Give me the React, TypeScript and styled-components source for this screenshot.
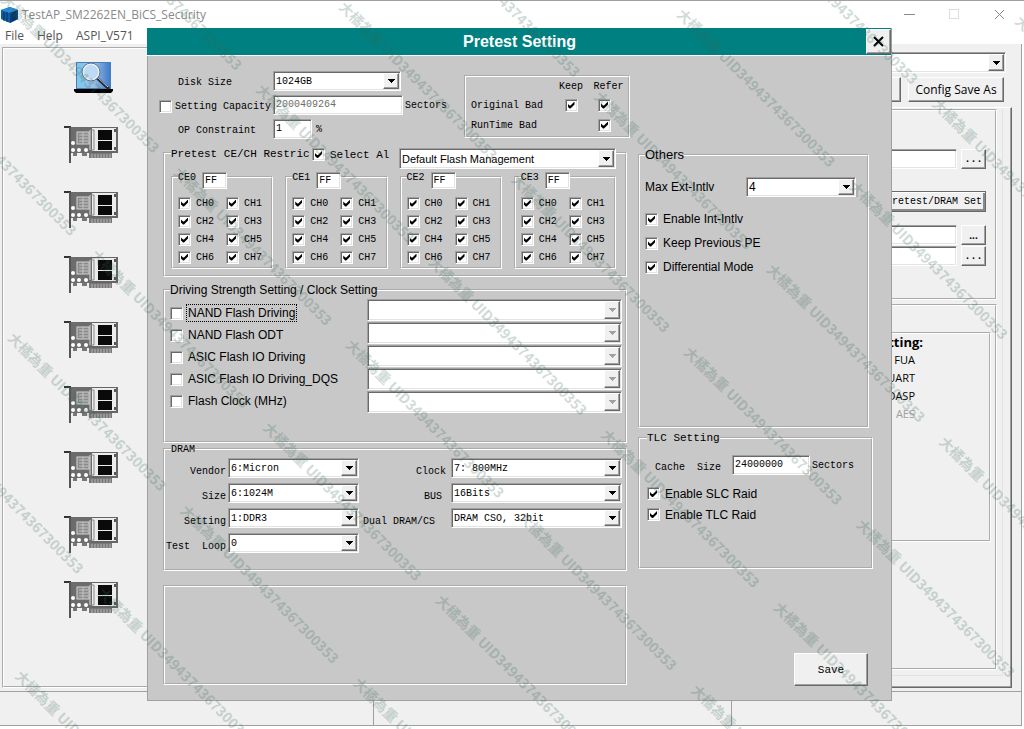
import React from 'react';
import styled, { createGlobalStyle, css } from 'styled-components';

const mono = '"Liberation Mono", monospace';
const sans = '"Liberation Sans", sans-serif';
const ui = '"Open Sans", "Noto Sans", sans-serif';

const GlobalStyle = createGlobalStyle`
  *, *::before, *::after { box-sizing: border-box; }
  body { margin: 0; background: #fff; color: #000; font: 12px ${sans}; overflow: hidden; }
  button, input, select { margin: 0; color: inherit; font: inherit; border-radius: 0; }
`;

const sunken = css`
  border: 1px solid;
  border-color: #a0a0a0 #fff #fff #a0a0a0;
  box-shadow: inset 1px 1px #696969, inset -1px -1px #e3e3e3;
`;

const raised = css`
  border: 1px solid;
  border-color: #fff #696969 #696969 #fff;
  box-shadow: inset -1px -1px #a0a0a0;
  background: #f0f0f0;
`;

/* ---------- shared controls ---------- */

const Field = styled.input<{ $w?: number }>`
  ${sunken}
  display: block;
  width: ${p => (p.$w ? `${p.$w}px` : '100%')};
  min-width: 0;
  height: 20px;
  padding: 0 0 2px 2px;
  background: #fff;
  font: 10px ${mono};
  outline: none;
  &:disabled { color: #6d6d6d; background: #fff; }
`;

const SelectBox = styled.span<{ $h?: number; $w?: number }>`
  ${sunken}
  position: relative;
  display: block;
  flex: ${p => (p.$w ? 'none' : '1')};
  width: ${p => (p.$w ? `${p.$w}px` : 'auto')};
  min-width: 0;
  height: ${p => p.$h ?? 20}px;
  background: #fff;
`;

const NativeSelect = styled.select<{ $font?: string }>`
  appearance: none;
  display: block;
  width: 100%;
  height: 100%;
  padding: 0 18px 0 2px;
  border: 0;
  background: transparent;
  font: ${p => p.$font ?? `10px ${mono}`};
  outline: none;
  opacity: 1;
`;

const ArrowCap = styled.span<{ $off?: boolean }>`
  ${raised}
  position: absolute;
  top: 1px;
  right: 1px;
  bottom: 1px;
  width: 16px;
  display: flex;
  align-items: center;
  justify-content: center;
  pointer-events: none;
  color: ${p => (p.$off ? '#a0a0a0' : '#000')};
`;

function Select(props: {
  label?: string; id?: string; value: string; disabled?: boolean; h?: number; w?: number; font?: string;
}) {
  return (
    <SelectBox $h={props.h} $w={props.w}>
      <NativeSelect id={props.id} aria-label={props.label} disabled={props.disabled} $font={props.font}>
        <option>{props.value}</option>
      </NativeSelect>
      <ArrowCap $off={props.disabled}>
        <svg width="7" height="4" shapeRendering="crispEdges" aria-hidden="true">
          <path d="M0 0h7v1h-1v1h-1v1h-1v1h-1v-1h-1v-1h-1v-1h-1z" fill="currentColor" />
        </svg>
      </ArrowCap>
    </SelectBox>
  );
}

const Tick = styled.input.attrs({ type: 'checkbox' })`
  ${sunken}
  appearance: none;
  position: relative;
  flex: none;
  display: block;
  width: 13px;
  height: 13px;
  background: #fff;
  &:checked::after {
    content: '';
    position: absolute;
    top: 2px;
    left: 2px;
    width: 7px;
    height: 7px;
    background: #000;
    clip-path: polygon(0 2px, 2px 4px, 3px 4px, 7px 0, 7px 3px, 3px 7px, 2px 7px, 0 5px);
  }
`;

const TickLabel = styled.label<{ $mono?: boolean; $h: number }>`
  display: flex;
  align-items: center;
  gap: 5px;
  height: ${p => p.$h}px;
  white-space: nowrap;
  font: ${p => (p.$mono ? `10px ${mono}` : `12px ${sans}`)};
`;

const FocusText = styled.span<{ $focus?: boolean }>`
  outline: ${p => (p.$focus ? '1px dotted #000' : 'none')};
  outline-offset: 1px;
`;

const Group = styled.fieldset<{ $pad?: string; $top?: number; $min?: number; $right?: number }>`
  min-width: 0;
  margin: ${p => p.$top ?? 0}px ${p => p.$right ?? 0}px 0 0;
  padding: ${p => p.$pad ?? '0'};
  min-height: ${p => (p.$min ? `${p.$min}px` : '0')};
  border: 2px groove #fff;
`;

const Legend = styled.legend<{ $font?: string; $h?: number; $inset?: number; $wide?: boolean }>`
  display: flex;
  align-items: flex-start;
  width: ${p => (p.$wide ? '100%' : 'auto')};
  height: ${p => p.$h ?? 10}px;
  margin-left: ${p => p.$inset ?? 0}px;
  padding: 0;
  white-space: nowrap;
  font: ${p => p.$font ?? `10px ${mono}`};
  line-height: ${p => p.$h ?? 12}px;
`;

/* ---------- main window ---------- */

const Window = styled.div`
  position: relative;
  display: flex;
  flex-direction: column;
  min-height: 100vh;
  padding: 0 2px 3px 0;
  border-top: 1px solid #a0a0a0;
  overflow: hidden;
`;

const TitleBar = styled.header`
  display: flex;
  align-items: center;
  gap: 4px;
  height: 27px;
  padding: 0 17px 0 1px;
  color: #8a8a8a;
  font: 12px ${ui};
`;

const TitleText = styled.span`flex: 1;`;

const WindowButtons = styled.div`
  display: flex;
  gap: 34px;
`;

const GlyphButton = styled.button`
  display: flex;
  padding: 0;
  border: 0;
  background: none;
  color: #8a8a8a;
`;

const MenuBar = styled.nav`
  display: flex;
  gap: 13px;
  height: 16px;
  padding-left: 5px;
`;

const MenuLink = styled.a`
  color: #555;
  font: 12px/16px ${ui};
  text-decoration: none;
`;

const Workspace = styled.div`
  flex: 1;
  display: flex;
  padding: 3px 9px 3px 2px;
  background: #f0f0f0;
  border-right: 1px solid #a0a0a0;
`;

const Sidebar = styled.aside`
  flex: 1;
  border: 2px groove #fff;
`;

const DeviceList = styled.ul`
  display: flex;
  flex-direction: column;
  gap: 28px;
  margin: 0;
  padding: 13px 0 0 60px;
  list-style: none;
`;

const Scan = styled.li`
  height: 36px;
  padding-left: 10px;
`;

const DeviceItem = styled.li`height: 37px;`;

const SettingsPane = styled.section`
  display: flex;
  flex-direction: column;
  width: 360px;
  padding-top: 5px;
`;

const PickRow = styled.div`
  display: flex;
  padding-right: 6px;
`;

const ButtonRow = styled.div`
  display: flex;
  justify-content: flex-end;
  gap: 7px;
  margin: 4px 8px 5px 0;
`;

const PushButton = styled.button<{ $font?: string; $w?: number; $h?: number }>`
  ${raised}
  flex: none;
  width: ${p => (p.$w ? `${p.$w}px` : 'auto')};
  height: ${p => p.$h ?? 25}px;
  padding: 0;
  font: ${p => p.$font ?? `12px ${ui}`};
  white-space: nowrap;
`;

const DefaultButton = styled(PushButton)`
  padding-right: 3px;
  text-align: right;
  border: 1px solid #696969;
  box-shadow: inset 1px 1px #fff, inset -2px -2px #8a8a8a;
`;

const TabPanel = styled.div`
  ${raised}
  flex: 1;
  display: flex;
  padding: 1px 8px 11px 1px;
`;

const TabPage = styled.div`
  flex: 1;
  display: flex;
  flex-direction: column;
  padding: 0 5px 5px 0;
  border-right: 1px solid #e3e3e3;
  border-bottom: 1px solid #e3e3e3;
`;

const PathRow = styled.div<{ $top: number }>`
  display: flex;
  justify-content: flex-end;
  gap: 4px;
  margin-top: ${p => p.$top}px;
`;

const GrowGroup = styled(Group)`flex: 1;`;

const Features = styled.div`
  padding-right: 66px;
  text-align: right;
  font: 11px/18px ${ui};
`;

const FeatureTitle = styled.h2`
  margin: 0;
  font: bold 13px/17px ${ui};
`;

const Feature = styled.div<{ $off?: boolean }>`
  padding-right: 8px;
  color: ${p => (p.$off ? '#a0a0a0' : '#000')};
`;

const StatusBar = styled.footer`
  display: grid;
  grid-template-columns: 374fr 358fr 290fr;
  height: 35px;
  background: #f0f0f0;
  border-top: 1px solid #a0a0a0;
  border-bottom: 1px solid #a0a0a0;
`;

const StatusCell = styled.div`
  border-right: 1px solid #a0a0a0;
`;

/* ---------- dialog ---------- */

const Dialog = styled.section`
  position: absolute;
  top: 27px;
  left: 147px;
  right: 132px;
  background: #c8c8c8;
  border: 1px solid #a0a0a0;
  border-top: 0;
`;

const DialogTitle = styled.header`
  display: flex;
  align-items: center;
  height: 28px;
  margin-left: -1px;
  background: #008080;
  border-bottom: 1px solid #fff;
  color: #fff;
`;

const DialogHeading = styled.h1`
  flex: 1;
  margin: 0;
  padding-left: 26px;
  text-align: center;
  font: bold 16px ${sans};
`;

const CloseButton = styled.button`
  ${raised}
  display: flex;
  align-items: center;
  justify-content: center;
  width: 25px;
  height: 25px;
  padding: 0;
`;

const TopSection = styled.div`
  display: flex;
  justify-content: space-between;
  padding: 15px 261px 0 11px;
`;

const DiskGrid = styled.div`
  display: grid;
  grid-template-columns: 114px 130px auto;
  grid-auto-rows: 24px;
`;

const DiskLabel = styled.label<{ $in?: number }>`
  display: flex;
  align-items: center;
  gap: 3px;
  height: 23px;
  padding-left: ${p => p.$in ?? 0}px;
  font: 10px ${mono};
  white-space: nowrap;
`;

const Unit = styled.span`
  padding: 5px 0 0 2px;
  font: 10px ${mono};
`;

const UnitField = styled.span`
  display: flex;
  gap: 2px;
`;

const BadBox = styled.div`
  align-self: flex-start;
  width: 166px;
  height: 63px;
  margin-top: 4px;
  border: 2px groove #fff;
`;

const BadTable = styled.table`
  width: 100%;
  border-collapse: collapse;
  table-layout: fixed;
  font: 10px ${mono};
  th { padding: 0; font-weight: normal; text-align: center; }
  th:first-child { width: 87px; padding-left: 5px; text-align: left; }
  th:nth-child(2) { width: 36px; }
  td { padding: 0; }
  td:last-child { padding-right: 8px; }
  td > input { margin: 0 auto; }
  tr { height: 20px; }
  thead tr { height: 18px; }
`;

const Columns = styled.div`
  display: grid;
  grid-template-columns: minmax(0, 464fr) minmax(0, 235fr);
  gap: 11px;
  padding: 5px 18px 14px 15px;
`;

const Column = styled.div`
  display: flex;
  flex-direction: column;
`;

const CutText = styled.span`
  width: 141px;
  overflow: hidden;
  line-height: 12px;
`;

const SelectAll = styled.label`
  display: flex;
  align-items: center;
  gap: 5px;
  width: 87px;
  line-height: 12px;
`;

const CeGrid = styled.div`
  display: grid;
  grid-template-columns: repeat(4, minmax(0, 1fr));
  gap: 12px;
`;

const CeLegend = styled(Legend)`gap: 6px;`;

const CeField = styled(Field)`
  height: 17px;
  padding: 0 0 0 2px;
`;

const ChannelGrid = styled.div`
  display: grid;
  grid-template-columns: 48px 1fr;
`;

const DriveRow = styled.div`
  display: flex;
  justify-content: space-between;
`;

const DriveLabels = styled.div`padding-top: 3px;`;

const DriveSelects = styled.div`
  display: flex;
  flex-direction: column;
  gap: 1px;
  width: 255px;
`;

const SelectRow = styled.div`display: flex;`;

const DramGrid = styled.div`
  display: grid;
  grid-template-columns: 62px 131px 92px 1fr;
  grid-auto-rows: 25px;
`;

const DramLabel = styled.label<{ $gap: number }>`
  padding: 8px ${p => p.$gap}px 0 0;
  text-align: right;
  white-space: pre;
  font: 10px ${mono};
`;

const SpreadRow = styled.div`
  display: flex;
  align-items: center;
  justify-content: space-between;
  margin-bottom: 10px;
`;

const CacheRow = styled.div`
  display: flex;
  align-items: flex-start;
  margin-bottom: 8px;
  padding-left: 8px;
`;

const CacheLabel = styled.label`
  width: 77px;
  padding-top: 7px;
  font: 10px ${mono};
  white-space: pre;
`;

const SaveButton = styled(PushButton)`
  align-self: flex-end;
  margin: 84px 5px 0 0;
`;

const Watermark = styled.svg`
  position: absolute;
  inset: 0;
  width: 100%;
  height: 100%;
  pointer-events: none;
  fill: #3a6858;
  opacity: 0.23;
  font: bold 14px "Noto Sans CJK TC", "Liberation Sans", sans-serif;
`;

/* ---------- drawings ---------- */

const AppIcon = () => (
  <svg width="17" height="17" viewBox="0 0 17 17" aria-hidden="true">
    <path d="M0 4 9 1l8 3v9l-8 4-9-4z" fill="#0b5fa8" />
    <path d="M0 4 9 1l8 3-9 3z" fill="#2a8bd8" />
    <path d="M9 7l8-3v9l-8 4z" fill="#06407c" />
    <path d="M3 6v9M6 6v10M12 6v9M14 5v9" stroke="#0a2c54" strokeWidth="1" />
  </svg>
);

const ScanIcon = () => (
  <svg width="40" height="32" viewBox="0 0 40 32" role="img" aria-label="Scan drives">
    <defs>
      <linearGradient id="screen" x1="0" y1="0" x2="1" y2="0">
        <stop offset="0" stopColor="#7cc8ec" />
        <stop offset="0.5" stopColor="#9cc0ea" />
        <stop offset="1" stopColor="#3f7cc8" />
      </linearGradient>
    </defs>
    <rect x="2" y="0" width="35" height="28" fill="#4a7cb8" />
    <rect x="3" y="1" width="33" height="25" fill="url(#screen)" />
    <path d="M0 27h39v2l-2 2H2l-2-2z" fill="#000" />
    <path d="M23 16l12 11" stroke="#222a33" strokeWidth="3" />
    <path d="M23 15l11 10" stroke="#c8d0d8" strokeWidth="1" />
    <circle cx="17" cy="10" r="8" fill="#c8e0f8" fillOpacity="0.8" stroke="#e8eef2" strokeWidth="2" />
    <circle cx="17" cy="10" r="9" fill="none" stroke="#5d7488" strokeWidth="1" />
  </svg>
);

const CardIcon = () => (
  <svg width="54" height="37" viewBox="0 0 54 37" role="img" aria-label="Test port">
    <path d="M0 0h7v2H0z" fill="#333" />
    <rect x="6" y="1" width="24" height="26" fill="#6c6c6c" />
    <rect x="28" y="1" width="26" height="26" fill="#666" />
    <rect x="28" y="2" width="24" height="23" fill="#ececec" />
    <path d="M5 1h2v36H5z" fill="#555" />
    <path d="M27 4h3v20h-3" fill="none" stroke="#888" />
    <path d="M26 4v20" stroke="#ddd" />
    <rect x="13" y="6" width="12" height="12" fill="#8a8a8a" stroke="#d4d4d4" />
    <path d="M15 9h9M15 12h9M15 15h9M19 6v12" stroke="#c4c4c4" strokeWidth="1" />
    <rect x="34" y="4" width="14" height="10" fill="#0a0a0a" />
    <rect x="34" y="15" width="14" height="9" fill="#0a0a0a" />
    <rect x="50" y="3" width="2" height="3" fill="#555" />
    <rect x="50" y="21" width="2" height="3" fill="#555" />
    <path d="M9 27h4v3H9zM18 27h5v3h-5z" fill="#777" />
    <rect x="25" y="27" width="23" height="5" fill="#777" />
    <path d="M28 28v4M31 28v4M34 28v4M37 28v4M40 28v4M43 28v4M46 28v4" stroke="#b8b8b8" />
    <g fill="#fff">
      <circle cx="9" cy="17" r="2" />
      <circle cx="9" cy="24" r="2" />
      <circle cx="15" cy="24" r="2" />
      <circle cx="22" cy="24" r="2" />
    </g>
  </svg>
);

const range = (from: number, to: number) => Array.from({ length: to - from + 1 }, (_, i) => from + i);

/* Grid cells of the rotated watermark whose text falls inside the window. */
const markCells = range(-1, 4)
  .flatMap(col => range(-8, 6).map(row => ({ x: col * 244, y: row * 117 })))
  .filter(({ x, y }) => {
    const left = (x - y) / Math.SQRT2;
    const top = (x + y) / Math.SQRT2;
    return left > -140 && left < 1020 && top > -140 && top < 720;
  });

const Marks = () => (
  <Watermark aria-hidden="true">
    <g transform="rotate(45)">
      {markCells.map(({ x, y }) => (
        <text key={`${x}:${y}`} x={x} y={y}>大橘為重 UID3494374367300353</text>
      ))}
    </g>
  </Watermark>
);

/* ---------- page ---------- */

const ces = ['CE0', 'CE1', 'CE2', 'CE3'];
const channels = range(0, 7).map(n => `CH${n}`);
const drives = ['NAND Flash Driving', 'NAND Flash ODT', 'ASIC Flash IO Driving', 'ASIC Flash IO Driving_DQS', 'Flash Clock (MHz)'];
const dram: [string, string, number][] = [
  ['Vendor', '6:Micron', 2], ['Clock', '7: 800MHz', 5],
  ['Size', '6:1024M', 2], ['BUS', '16Bits', 9],
  ['Setting', '1:DDR3', 2], ['Dual DRAM/CS', 'DRAM CSO, 32bit', 16],
  ['Test  Loop', '0', 2],
];

export default function App() {
  return (
    <>
      <GlobalStyle />
      <Window>
        <TitleBar>
          <AppIcon />
          <TitleText>TestAP_SM2262EN_BiCS_Security</TitleText>
          <WindowButtons>
            <GlyphButton aria-label="Minimize">
              <svg width="11" height="11" shapeRendering="crispEdges"><path d="M0 5h11v1H0z" fill="currentColor" /></svg>
            </GlyphButton>
            <GlyphButton aria-label="Maximize">
              <svg width="11" height="11"><rect x="0.5" y="0.5" width="9" height="9" fill="none" stroke="#ddd" /></svg>
            </GlyphButton>
            <GlyphButton aria-label="Close window">
              <svg width="11" height="11"><path d="M1 1l9 9M10 1l-9 9" stroke="currentColor" /></svg>
            </GlyphButton>
          </WindowButtons>
        </TitleBar>
        <MenuBar>
          <MenuLink href="#file">File</MenuLink>
          <MenuLink href="#help">Help</MenuLink>
          <MenuLink href="#aspi">ASPI_V571</MenuLink>
        </MenuBar>

        <Workspace>
          <Sidebar>
            <DeviceList>
              <Scan><ScanIcon /></Scan>
              {range(1, 8).map(n => <DeviceItem key={n}><CardIcon /></DeviceItem>)}
            </DeviceList>
          </Sidebar>
          <SettingsPane>
            <PickRow><Select label="Config" value="" h={21} /></PickRow>
            <ButtonRow>
              <PushButton $w={90} aria-label="Config Save" />
              <PushButton $w={96}>Config Save As</PushButton>
            </ButtonRow>
            <TabPanel>
              <TabPage>
                <Group $pad="38px 9px 32px 0">
                  <PathRow $top={0}>
                    <Field aria-label="Path 1" />
                    <PushButton $w={25} $h={20} $font={`bold 10px ${mono}`}>...</PushButton>
                  </PathRow>
                  <PathRow $top={22}>
                    <DefaultButton $w={112} $h={21} $font={`10px ${mono}`}>Pretest/DRAM Set</DefaultButton>
                  </PathRow>
                  <PathRow $top={13}>
                    <Field aria-label="Path 2" />
                    <PushButton $w={25} $h={20} $font={`bold 10px ${sans}`}>...</PushButton>
                  </PathRow>
                  <PathRow $top={1}>
                    <Field aria-label="Path 3" />
                    <PushButton $w={25} $h={20} $font={`bold 10px ${mono}`}>...</PushButton>
                  </PathRow>
                </Group>
                <GrowGroup $top={4} $pad="26px 4px 0 0">
                  <Group $min={210}>
                    <Features>
                      <FeatureTitle>Setting:</FeatureTitle>
                      <Feature>FUA</Feature>
                      <Feature>UART</Feature>
                      <Feature>DASP</Feature>
                      <Feature $off>AES</Feature>
                    </Features>
                  </Group>
                </GrowGroup>
              </TabPage>
            </TabPanel>
          </SettingsPane>
        </Workspace>
        <StatusBar>
          <StatusCell />
          <StatusCell />
          <StatusCell />
        </StatusBar>

        <Dialog role="dialog" aria-labelledby="dialog-title">
          <DialogTitle>
            <DialogHeading id="dialog-title">Pretest Setting</DialogHeading>
            <CloseButton aria-label="Close">
              <svg width="11" height="11"><path d="M1 1l9 9M10 1l-9 9" stroke="#000" strokeWidth="2" /></svg>
            </CloseButton>
          </DialogTitle>

          <TopSection>
            <DiskGrid>
              <DiskLabel htmlFor="disk" $in={19}>Disk Size</DiskLabel>
              <Select id="disk" value="1024GB" w={128} />
              <span />
              <DiskLabel><Tick />Setting Capacity</DiskLabel>
              <Field aria-label="Capacity" defaultValue="2000409264" disabled $w={130} />
              <Unit>Sectors</Unit>
              <DiskLabel htmlFor="op" $in={19}>OP Constraint</DiskLabel>
              <UnitField><Field id="op" defaultValue="1" $w={39} /><Unit>%</Unit></UnitField>
            </DiskGrid>
            <BadBox>
              <BadTable>
                <thead>
                  <tr><th aria-label="Block" /><th scope="col">Keep</th><th scope="col">Refer</th></tr>
                </thead>
                <tbody>
                  <tr>
                    <th scope="row">Original Bad</th>
                    <td><Tick defaultChecked aria-label="Keep original bad" /></td>
                    <td><Tick defaultChecked aria-label="Refer original bad" /></td>
                  </tr>
                  <tr>
                    <th scope="row">RunTime Bad</th>
                    <td />
                    <td><Tick defaultChecked aria-label="Refer runtime bad" /></td>
                  </tr>
                </tbody>
              </BadTable>
            </BadBox>
          </TopSection>

          <Columns>
            <Column>
              <Group $pad="14px 9px 6px 6px">
                <Legend $wide $font={`11px ${mono}`}>
                  <CutText>Pretest CE/CH Restric</CutText>
                  <SelectAll><Tick defaultChecked />Select Al</SelectAll>
                  <Select label="Flash management" value="Default Flash Management" h={21} font={`11px ${sans}`} />
                </Legend>
                <CeGrid>
                  {ces.map(ce => (
                    <Group key={ce} $pad="12px 0 1px 5px">
                      <CeLegend>
                        {ce}
                        <CeField aria-label={`${ce} mask`} defaultValue="FF" $w={25} />
                      </CeLegend>
                      <ChannelGrid>
                        {channels.map(ch => (
                          <TickLabel key={ch} $mono $h={18}><Tick defaultChecked />{ch}</TickLabel>
                        ))}
                      </ChannelGrid>
                    </Group>
                  ))}
                </CeGrid>
              </Group>

              <Group $top={6} $pad="2px 3px 28px 5px">
                <Legend $h={14} $font={`12px ${sans}`}>Driving Strength Setting / Clock Setting</Legend>
                <DriveRow>
                  <DriveLabels>
                    {drives.map((d, i) => (
                      <TickLabel key={d} $h={22}><Tick /><FocusText $focus={i === 0}>{d}</FocusText></TickLabel>
                    ))}
                  </DriveLabels>
                  <DriveSelects>
                    {drives.map(d => (
                      <SelectRow key={d}><Select label={`${d} value`} value="" disabled h={22} /></SelectRow>
                    ))}
                  </DriveSelects>
                </DriveRow>
              </Group>

              <Group $top={1} $pad="4px 3px 11px 1px">
                <Legend $inset={5}>DRAM</Legend>
                <DramGrid>
                  {dram.map(([name, value, gap]) => (
                    <React.Fragment key={name}>
                      <DramLabel htmlFor={name} $gap={gap}>{name}</DramLabel>
                      <Select id={name} value={value} />
                    </React.Fragment>
                  ))}
                </DramGrid>
              </Group>

              <Group $top={14} $min={100} />
            </Column>

            <Column>
              <Group $pad="15px 11px 0 5px" $min={280} $right={4}>
                <Legend $h={14} $font={`13px ${sans}`}>Others</Legend>
                <SpreadRow>
                  <label htmlFor="ext">Max Ext-Intlv</label>
                  <Select id="ext" value="4" w={110} font={`12px ${sans}`} />
                </SpreadRow>
                <TickLabel $h={24}><Tick defaultChecked />Enable Int-Intlv</TickLabel>
                <TickLabel $h={24}><Tick defaultChecked />Keep Previous PE</TickLabel>
                <TickLabel $h={24}><Tick defaultChecked />Differential Mode</TickLabel>
              </Group>

              <Group $top={3} $pad="10px 0 0 7px" $min={138}>
                <Legend $h={14} $font={`11px ${mono}`}>TLC Setting</Legend>
                <CacheRow>
                  <CacheLabel htmlFor="cache">{'Cache  Size'}</CacheLabel>
                  <Field id="cache" defaultValue="24000000" $w={78} />
                  <Unit>Sectors</Unit>
                </CacheRow>
                <TickLabel $h={21}><Tick defaultChecked />Enable SLC Raid</TickLabel>
                <TickLabel $h={21}><Tick defaultChecked />Enable TLC Raid</TickLabel>
              </Group>

              <SaveButton $w={74} $h={33} $font={`11px ${mono}`}>Save</SaveButton>
            </Column>
          </Columns>
        </Dialog>
        <Marks />
      </Window>
    </>
  );
}
